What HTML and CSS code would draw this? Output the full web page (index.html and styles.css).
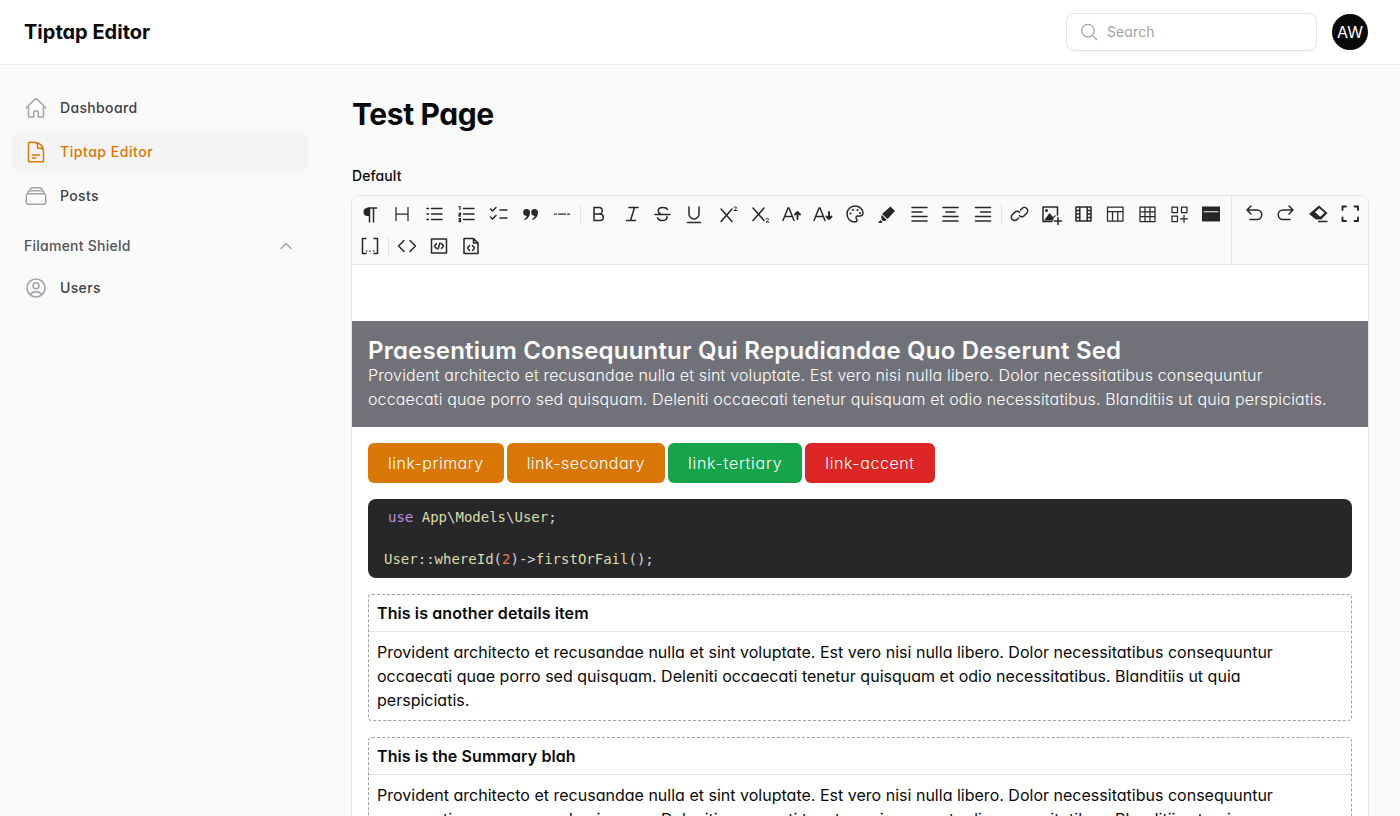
FILE: index.html
```html
<!DOCTYPE html>
<html lang="en">
<head>
    <meta charset="UTF-8">
    <meta name="viewport" content="width=device-width, initial-scale=1.0">
    <title>Tiptap Editor</title>
    <link rel="stylesheet" href="styles.css">
</head>
<body>
    <header class="topbar">
        <div class="brand">Tiptap Editor</div>
        <div class="topbar-right">
            <div class="search">
                <svg class="search-icon" viewBox="0 0 24 24"><path d="M21 21l-5.2-5.2m0 0A7.5 7.5 0 1 0 5.2 5.2a7.5 7.5 0 0 0 10.6 10.600z"/></svg>
                <span class="search-text">Search</span>
            </div>
            <div class="avatar">AW</div>
        </div>
    </header>

    <div class="layout">
        <aside class="sidebar">
            <a class="nav-item">
                <svg viewBox="0 0 24 24"><path d="M2.250 12l8.950-8.950a1.130 1.130 0 0 1 1.600 0L21.750 12M4.500 9.750v10.130c0 .62.500 1.120 1.130 1.120H9.750v-4.880c0-.62.500-1.120 1.130-1.120h2.250c.62 0 1.120.500 1.120 1.120V21h4.130c.62 0 1.120-.500 1.120-1.120V9.750"/></svg>
                <span>Dashboard</span>
            </a>
            <a class="nav-item active">
                <svg viewBox="0 0 24 24"><path d="M19.500 14.250v-2.630A3.380 3.380 0 0 0 16.130 8.250h-1.500A1.130 1.130 0 0 1 13.500 7.130v-1.500A3.380 3.380 0 0 0 10.130 2.250H8.250M10.500 2.250H5.630c-.62 0-1.130.500-1.130 1.130v17.250c0 .62.500 1.120 1.130 1.120h12.750c.62 0 1.120-.500 1.120-1.120V11.250a9 9 0 0 0-9-9zM8.250 15h7.500M8.250 18H12"/></svg>
                <span>Tiptap Editor</span>
            </a>
            <a class="nav-item">
                <svg viewBox="0 0 24 24"><path d="M6 6.880V6a2.250 2.250 0 0 1 2.250-2.250h7.500A2.250 2.250 0 0 1 18 6v.88M6 6.880c.35-.08.72-.13 1.130-.13h9.750c.4 0 .77.05 1.120.13M6 6.880A2.250 2.250 0 0 0 3.750 9v.88M18 6.880A2.250 2.250 0 0 1 20.250 9v.88M3.750 9.880c.35-.08.72-.13 1.130-.13h14.250c.4 0 .77.05 1.120.13M3.750 9.880A2.250 2.250 0 0 0 2.250 12v6A2.250 2.250 0 0 0 4.500 20.250h15A2.250 2.250 0 0 0 21.750 18v-6a2.250 2.250 0 0 0-1.500-2.120"/></svg>
                <span>Posts</span>
            </a>
            <div class="nav-group">
                <span>Filament Shield</span>
                <svg viewBox="0 0 20 20"><path d="M5 12.500l5-5 5 5"/></svg>
            </div>
            <a class="nav-item">
                <svg viewBox="0 0 24 24"><path d="M15 9.750a3 3 0 1 1-6 0 3 3 0 0 1 6 0zM17.980 18.730A7.480 7.480 0 0 0 12 15.750a7.480 7.480 0 0 0-5.980 2.980M21 12a9 9 0 1 1-18 0 9 9 0 0 1 18 0z"/></svg>
                <span>Users</span>
            </a>
        </aside>

        <main class="content">
            <h1 class="page-title">Test Page</h1>
            <div class="field-label">Default</div>

            <div class="editor">
                <div class="toolbar">
                    <div class="tools">
                        <button class="tool"><svg viewBox="0 0 24 24"><path class="solid" d="M11 6v8h-1.500a4 4 0 0 1 0-8z"/><path d="M18.500 6H10M11.500 6v14M15.500 6v14"/></svg></button>
                        <button class="tool"><svg viewBox="0 0 24 24"><path class="thin" d="M6 5.500v13M18 5.500v13M6 12h12"/></svg></button>
                        <button class="tool"><svg viewBox="0 0 24 24"><path d="M9.500 6.500H20M9.500 12H20M9.500 17.500H20M5 6.500h1.500M5 12h1.500M5 17.500h1.500"/></svg></button>
                        <button class="tool"><svg viewBox="0 0 24 24"><path d="M9.500 6.500H20M9.500 12H20M9.500 17.500H20"/><path class="thin" d="M5 4.500h1v3M5 11h1.500v1.500H5V14h1.500M5 16.500h1.500v3H5M5 18h1.500"/></svg></button>
                        <button class="tool"><svg viewBox="0 0 24 24"><path d="M4.500 7l2 2 3.500-3.500M4.500 15l2 2 3.500-3.500M14 8h7M14 16h7"/></svg></button>
                        <button class="tool"><svg viewBox="0 0 24 24"><path class="solid" d="M8.500 7a3.500 3.500 0 0 1 3.500 3.500c0 3.500-1.800 6-5.300 7.500l-.7-1.100c1.500-.8 2.500-1.800 2.800-3A3.250 3.250 0 0 1 8.500 7zM16.500 7a3.500 3.500 0 0 1 3.500 3.500c0 3.500-1.800 6-5.300 7.500l-.7-1.100c1.500-.8 2.500-1.800 2.800-3A3.250 3.250 0 0 1 16.500 7z"/></svg></button>
                        <button class="tool"><svg viewBox="0 0 24 24"><path class="thin" d="M4.500 12h2M8.500 12h7M17.500 12h2"/></svg></button>
                        <span class="sep"></span>
                        <button class="tool"><svg viewBox="0 0 24 24"><path d="M8 5.500h5a3.250 3.250 0 0 1 0 6.500H8zM8 12h6a3.250 3.250 0 0 1 0 6.500H8z"/></svg></button>
                        <button class="tool"><svg viewBox="0 0 24 24"><path d="M11 5.500h9M8.500 18.500h9M16.500 5.500l-4 13"/></svg></button>
                        <button class="tool"><svg viewBox="0 0 24 24"><path d="M17.500 7.500c-.5-1.300-2-2-4.500-2-3 0-4.800 1.200-4.800 3.200 0 1.400.8 2.500 2.300 3.300M5 12.500h15M17 14.500c.3 2.500-1.300 4-4.500 4-2.700 0-4.500-1-5-2.800"/></svg></button>
                        <button class="tool"><svg viewBox="0 0 24 24"><path d="M7 5v7a5 5 0 0 0 10 0V5M5.500 20.500h13"/></svg></button>
                        <button class="tool"><svg viewBox="0 0 24 24"><path d="M7 7l11 12.500M18 7L7 19.500"/><path class="tiny" d="M20 5.500c.3-1 2.500-1 2.500.3 0 1-1.700 1.400-2.500 2.700H23"/></svg></button>
                        <button class="tool"><svg viewBox="0 0 24 24"><path d="M7 6l11 12.500M18 6L7 18.500"/><path class="tiny" d="M20 17c.3-1 2.500-1 2.500.3 0 1-1.700 1.400-2.500 2.700H23"/></svg></button>
                        <button class="tool"><svg viewBox="0 0 24 24"><path d="M5 18.500l5-12.500h1l5 12.500M7 14.500h7"/><path class="bold" d="M19.500 17v-7M17 12.500l2.500-2.500 2.500 2.500"/></svg></button>
                        <button class="tool"><svg viewBox="0 0 24 24"><path d="M4 18.500l5-12.500h1l5 12.500M6 14.500h7"/><path class="bold" d="M19 10v7M16.500 14.500l2.500 2.500 2.500-2.500"/></svg></button>
                        <button class="tool"><svg viewBox="0 0 24 24"><path d="M13 4a8 8 0 0 0 0 16c1.500 0 2-.8 2-1.700 0-1.300-1-1.500-1-2.600 0-.9.7-1.700 1.700-1.700H18a3 3 0 0 0 3-3c0-3.800-3.600-7-8-7z"/><circle class="dot" cx="8.500" cy="11.500" r="1.100"/><circle class="dot" cx="11" cy="8" r="1.100"/><circle class="dot" cx="15.500" cy="8" r="1.100"/><circle class="dot" cx="18" cy="11" r="1.100"/></svg></button>
                        <button class="tool"><svg viewBox="0 0 24 24"><path class="solid" d="M16.500 4.500L21 9l-7.500 8-5.500-5zM7.700 13l4.800 4.600-1.500 1.400H9l-1.300-1.200-.5-3zM6.500 18l2 2-1 1H4z"/></svg></button>
                        <button class="tool"><svg viewBox="0 0 24 24"><path d="M6 5.500h15M6 10h10M6 14.500h15M6 19h15"/></svg></button>
                        <button class="tool"><svg viewBox="0 0 24 24"><path d="M5 5.500h15M8 10h9M5 14.500h15M5 19h15"/></svg></button>
                        <button class="tool"><svg viewBox="0 0 24 24"><path d="M5.500 5.500h15M10.500 10h10M5.500 14.500h15M5.500 19h15"/></svg></button>
                        <span class="sep sep-wide"></span>
                        <button class="tool"><svg viewBox="0 0 24 24"><path d="M13.500 8l1.500-1.500a3.300 3.300 0 0 1 4.700 4.700l-2.500 2.500a3.300 3.300 0 0 1-4.700 0M11.500 16l-1.500 1.500a3.300 3.300 0 0 1-4.700-4.700l2.500-2.500a3.300 3.300 0 0 1 4.700 0"/></svg></button>
                        <button class="tool"><svg viewBox="0 0 24 24"><path d="M13 19.500H4V5h14.500v8"/><path class="solid" d="M5 18.500l5.500-7.500 3.500 4 1.500-1.500 2 0-3 2.500v2.500z"/><circle class="dot" cx="7.500" cy="8.500" r="1.500"/><path d="M19 15.500v7M15.500 19h7"/></svg></button>
                        <button class="tool"><svg viewBox="0 0 24 24"><path d="M5 5h15v14H5zM8.800 5v14M16.200 5v14M5 8.500h3.800M5 12h3.800M5 15.500h3.800M16.200 8.500H20M16.200 12H20M16.200 15.500H20"/></svg></button>
                        <button class="tool"><svg viewBox="0 0 24 24"><path class="thin" d="M4.500 5h15.500v14H4.500zM4.500 9.500H20M9.500 9.500V19M14.800 9.500V19"/></svg></button>
                        <button class="tool"><svg viewBox="0 0 24 24"><path class="thin" d="M5 5h15v14.500H5zM5 9.800h15M5 14.600h15M10 5v14.500M15 5v14.500"/></svg></button>
                        <button class="tool"><svg viewBox="0 0 24 24"><path class="thin" d="M5 5h5.500v5.500H5zM14.500 5H20v5.500h-5.500zM5 14h5.500v5.500H5zM13.500 16.800h7M17 13.300v7"/></svg></button>
                        <button class="tool"><svg viewBox="0 0 24 24"><path class="solid" fill-rule="evenodd" d="M3 4.500h18v15H3zM4.500 9.200v1h15v-1z"/></svg></button>
                        <span class="sep sep-wrap"></span>
                        <button class="tool"><svg viewBox="0 0 24 24"><path d="M8 4.500H4.500v15H8M16 4.500h3.500v15H16M8.500 17h.01M12 17h.01M15.500 17h.01"/></svg></button>
                        <span class="sep sep-row"></span>
                        <button class="tool"><svg viewBox="0 0 24 24"><path d="M9 6.500L3.500 12 9 17.500M15 6.500l5.500 5.500-5.500 5.500"/></svg></button>
                        <button class="tool"><svg viewBox="0 0 24 24"><path d="M4.500 5h15v14h-15zM9.500 9.500L7.500 12l2 2.500M14.500 9.500l2 2.500-2 2.500M13 9l-2 6"/></svg></button>
                        <button class="tool"><svg viewBox="0 0 24 24"><path d="M14.500 4.500H5v15h14V9zM14.500 4.500V9H19M10.500 11.500L8.500 14l2 2.500M13.500 11.500l2 2.500-2 2.500"/></svg></button>
                    </div>
                    <div class="tools-side">
                        <button class="tool"><svg viewBox="0 0 24 24"><path d="M9 4L5 8l4 4M5 8h10a4.750 4.750 0 0 1 0 9.500H8"/></svg></button>
                        <button class="tool"><svg viewBox="0 0 24 24"><path d="M15 4l4 4-4 4M19 8H9a4.750 4.750 0 0 0 0 9.500h7"/></svg></button>
                        <button class="tool"><svg viewBox="0 0 24 24"><path class="solid" fill-rule="evenodd" d="M13 3.500l8.500 7.500-6.300 6.500H10L3 12zM13.200 6.200L9 10.200l5.300 4.600 4.300-4zM12 18.800h9.500v1.500H12z"/></svg></button>
                        <button class="tool"><svg viewBox="0 0 24 24"><path class="bold" d="M4.500 8V4.500H8M16.500 4.500H20V8M4.500 15.500V19H8M16.500 19H20v-3.500"/></svg></button>
                    </div>
                </div>

                <div class="prose">
                    <section class="hero">
                        <h2>Praesentium Consequuntur Qui Repudiandae Quo Deserunt Sed</h2>
                        <p>Provident architecto et recusandae nulla et sint voluptate. Est vero nisi nulla libero. Dolor necessitatibus consequuntur occaecati quae porro sed quisquam. Deleniti occaecati tenetur quisquam et odio necessitatibus. Blanditiis ut quia perspiciatis.</p>
                    </section>

                    <div class="links">
                        <a class="link-btn amber">link-primary</a>
                        <a class="link-btn amber">link-secondary</a>
                        <a class="link-btn green">link-tertiary</a>
                        <a class="link-btn red">link-accent</a>
                    </div>

                    <pre class="code"><code><span class="code-first"><span class="kw">use</span> <span class="id">App</span>\<span class="id">Models</span>\<span class="id">User</span>;</span>

<span class="id">User</span>::<span class="id">whereId</span>(<span class="num">2</span>)-&gt;<span class="id">firstOrFail</span>();</code></pre>

                    <div class="details">
                        <div class="summary">This is another details item</div>
                        <p>Provident architecto et recusandae nulla et sint voluptate. Est vero nisi nulla libero. Dolor necessitatibus consequuntur occaecati quae porro sed quisquam. Deleniti occaecati tenetur quisquam et odio necessitatibus. Blanditiis ut quia perspiciatis.</p>
                    </div>

                    <div class="details">
                        <div class="summary">This is the Summary blah</div>
                        <p>Provident architecto et recusandae nulla et sint voluptate. Est vero nisi nulla libero. Dolor necessitatibus consequuntur occaecati quae porro sed quisquam. Deleniti occaecati tenetur quisquam et odio necessitatibus. Blanditiis ut quia perspiciatis.</p>
                    </div>
                </div>
            </div>
        </main>
    </div>
</body>
</html>
```

FILE: styles.css
```css
* {
    box-sizing: border-box;
}

html, body {
    height: 100%;
    overflow: hidden;
}

body {
    margin: 0;
    background-color: #fafafa;
    color: #09090b;
    font-family: "Inter", "Noto Sans", sans-serif;
    font-feature-settings: "cv11";
}

svg {
    fill: none;
    stroke: currentColor;
    stroke-width: 1.5;
    stroke-linecap: round;
    stroke-linejoin: round;
    flex-shrink: 0;
}

.topbar {
    height: 65px;
    background: #fff;
    border-bottom: 1px solid #ececee;
    display: flex;
    align-items: center;
    justify-content: space-between;
    padding: 0 32px 0 24px;
}

.brand {
    font-size: 20px;
    font-weight: 700;
    padding-bottom: 1px;
}

.topbar-right {
    display: flex;
    align-items: center;
    gap: 15px;
}

.search {
    width: 251px;
    height: 38px;
    border: 1px solid #e4e4e7;
    border-radius: 8px;
    display: flex;
    align-items: center;
    gap: 8px;
    padding-left: 12px;
    color: #a1a1aa;
    font-size: 14px;
    letter-spacing: 0.1px;
    box-shadow: 0 1px 2px rgba(0, 0, 0, 0.04);
}

.search-text {
    padding-bottom: 2px;
}

.search-icon {
    width: 20px;
    height: 20px;
}

.avatar {
    width: 36px;
    height: 36px;
    border-radius: 50%;
    background: #09090b;
    color: #fff;
    font-size: 16px;
    display: flex;
    align-items: center;
    justify-content: center;
}

.layout {
    display: flex;
}

.sidebar {
    width: 320px;
    flex-shrink: 0;
    padding: 23px 12px 0;
    display: flex;
    flex-direction: column;
    gap: 4px;
}

.nav-item {
    height: 40px;
    padding: 0 12px;
    border-radius: 8px;
    display: flex;
    align-items: center;
    gap: 12px;
    font-size: 14px;
    font-weight: 500;
    letter-spacing: 0.35px;
    color: #3f3f46;
}

.nav-item span {
    padding-bottom: 2px;
}

.nav-item svg {
    width: 24px;
    height: 24px;
    color: #a1a1aa;
}

.nav-item.active {
    background: #f4f4f5;
    color: #d97706;
}

.nav-item.active span {
    letter-spacing: 0.55px;
}

.nav-item.active svg {
    color: #d97706;
}

.nav-group {
    display: flex;
    align-items: center;
    justify-content: space-between;
    padding: 0 12px;
    margin-top: 8px;
    height: 36px;
    font-size: 14px;
    font-weight: 500;
    letter-spacing: 0.25px;
    color: #52525b;
}

.nav-group span {
    padding-bottom: 2px;
}

.nav-group svg {
    width: 20px;
    height: 20px;
    color: #a1a1aa;
}

.content {
    flex: 1;
    padding: 31px 32px 0;
}

.page-title {
    margin: 0;
    font-size: 30px;
    line-height: 36px;
    font-weight: 700;
    letter-spacing: -0.4px;
}

.field-label {
    margin-top: 34px;
    font-size: 14px;
    line-height: 20px;
    font-weight: 500;
    letter-spacing: 0.1px;
}

.editor {
    margin-top: 10px;
    background: #fff;
    border-radius: 8px;
    box-shadow: 0 0 0 1px #e4e4e7;
}

.toolbar {
    display: flex;
    background: #fafafa;
    border-bottom: 1px solid #e4e4e7;
    border-radius: 8px 8px 0 0;
}

.tools {
    flex: 1;
    display: flex;
    flex-wrap: wrap;
    padding: 2px;
}

.tools-side {
    width: 137px;
    display: flex;
    align-items: flex-start;
    padding: 2px 0 0 6px;
    border-left: 1px solid #e4e4e7;
}

.tool {
    width: 32px;
    height: 32px;
    padding: 0;
    border: 0;
    background: none;
    color: #27272a;
    display: flex;
    align-items: center;
    justify-content: center;
}

.tool svg {
    width: 24px;
    height: 24px;
}

.tool .thin {
    stroke-width: 1.25;
}

.tool .bold {
    stroke-width: 1.9;
}

.tool .tiny {
    stroke-width: 1;
}

.tool .solid,
.tool .dot {
    fill: currentColor;
    stroke: none;
}

.sep {
    width: 1px;
    height: 20px;
    margin: 6px 1px 0 2px;
    background: #e4e4e7;
}

.sep-wide {
    margin-left: 3px;
}

.sep-wrap {
    width: 0;
    margin: 0;
    flex-basis: 100%;
    height: 0;
}

.sep-row {
    margin-right: 2px;
}

.prose {
    padding-top: 56px;
    font-size: 16px;
    line-height: 24px;
}

.hero {
    background: #71717a;
    color: #fff;
    padding: 16px;
    height: 106px;
}

.hero h2 {
    margin: 0;
    padding-top: 1px;
    font-size: 24px;
    line-height: 25px;
    font-weight: 600;
    letter-spacing: 0.2px;
}

.hero p {
    margin: 0;
    padding-right: 18px;
    font-weight: 300;
    letter-spacing: 0.14px;
}

.links {
    display: flex;
    gap: 3px;
    padding: 16px 16px 0;
}

.link-btn {
    height: 40px;
    padding: 0 20px;
    border-radius: 6px;
    color: #fff;
    line-height: 40px;
    font-weight: 300;
    letter-spacing: 0.5px;
}

.amber {
    background: #d97706;
}

.green {
    background: #16a34a;
    letter-spacing: 0.73px;
}

.red {
    background: #dc2626;
    letter-spacing: 0.6px;
}

.code {
    margin: 16px 16px 0;
    height: 79px;
    padding: 8px 16px;
    background: #27272a;
    border-radius: 8px;
    color: #d4d4d4;
    font-family: "DejaVu Sans Mono", monospace;
    font-feature-settings: normal;
    font-size: 14px;
    line-height: 21px;
}

.code-first {
    margin-left: 4px;
}

.kw {
    color: #c08adf;
}

.id {
    color: #dcdca8;
}

.num {
    color: #e2725b;
}

.details {
    margin: 16px 16px 0;
    border: 1px dashed #a1a1aa;
    border-radius: 4px;
}

.summary {
    padding: 6px 8px;
    font-weight: 600;
    line-height: 24px;
    letter-spacing: 0.1px;
    border-bottom: 1px solid #e4e4e7;
    height: 37px;
}

.details p {
    margin: 0;
    padding: 8px 40px 8px 8px;
    letter-spacing: 0.01px;
}
```
